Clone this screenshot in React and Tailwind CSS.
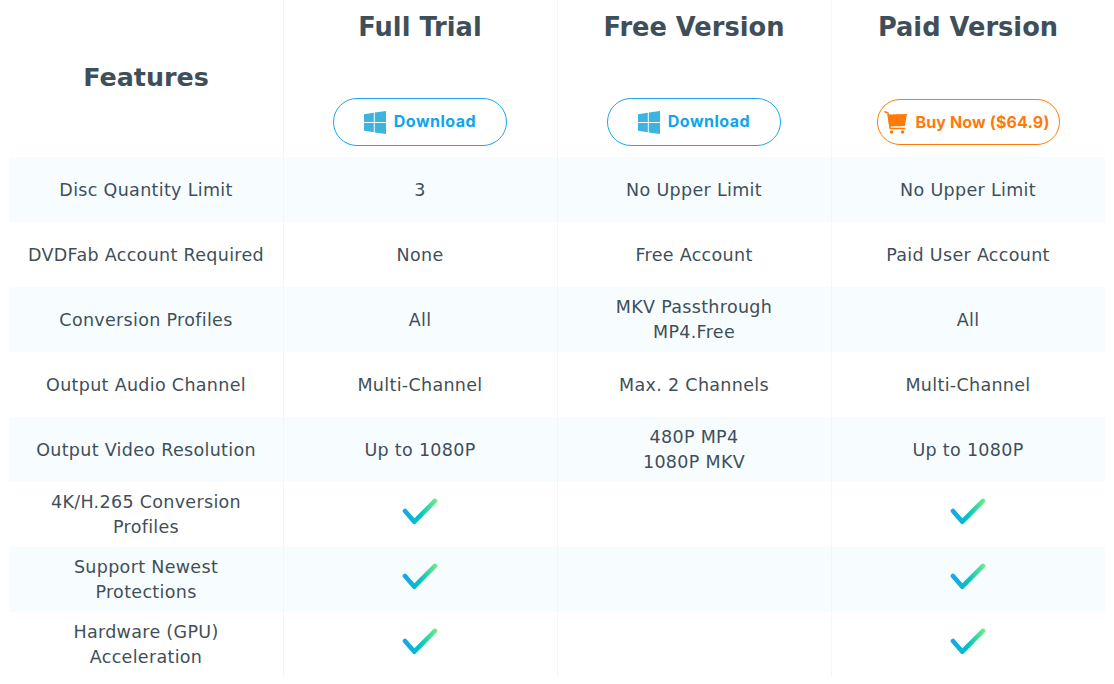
import React from "react";

const rows = [
  { name: ["Disc Quantity Limit"], cells: [["3"], ["No Upper Limit"], ["No Upper Limit"]] },
  { name: ["DVDFab Account Required"], cells: [["None"], ["Free Account"], ["Paid User Account"]] },
  { name: ["Conversion Profiles"], cells: [["All"], ["MKV Passthrough", "MP4.Free"], ["All"]] },
  { name: ["Output Audio Channel"], cells: [["Multi-Channel"], ["Max. 2 Channels"], ["Multi-Channel"]] },
  { name: ["Output Video Resolution"], cells: [["Up to 1080P"], ["480P MP4", "1080P MKV"], ["Up to 1080P"]] },
  { name: ["4K/H.265 Conversion", "Profiles"], cells: [true, false, true] },
  { name: ["Support Newest", "Protections"], cells: [true, false, true] },
  { name: ["Hardware (GPU)", "Acceleration"], cells: [true, false, true] },
];

const WindowsIcon = () => (
  <svg width="22" height="23" viewBox="0 0 22 23" className="shrink-0">
    <path d="M0 3.2 9.8 1.8V10.9H0Z" fill="#3db3e0" />
    <path d="M10.8 1.6 22 0V10.9H10.8Z" fill="#3db3e0" />
    <path d="M0 11.9H9.8V21.2L0 19.8Z" fill="#3db3e0" />
    <path d="M10.8 11.9H22V23L10.8 21.4Z" fill="#3db3e0" />
  </svg>
);

const CartIcon = () => (
  <svg width="23" height="23" viewBox="0 0 23 23" className="shrink-0">
    <path d="M0.8 0.8 4 2 6.2 17.6H20.6" fill="none" stroke="#ff7a0a" strokeWidth="1.5" strokeLinecap="round" strokeLinejoin="round" />
    <path d="M3.4 3.6 23 3 20.8 15 5.2 15.6Z" fill="#ff7a0a" />
    <circle cx="7.5" cy="21" r="1.8" fill="#ff7a0a" />
    <circle cx="18.5" cy="21" r="1.8" fill="#ff7a0a" />
  </svg>
);

const Check = ({ id }) => (
  <svg width="38" height="28" viewBox="0 0 38 28" className="mb-[5px] -ml-px">
    <defs>
      <linearGradient id={id} x1="2" y1="0" x2="36" y2="0" gradientUnits="userSpaceOnUse">
        <stop offset="0" stopColor="#1aa3f0" />
        <stop offset="0.5" stopColor="#00c4c0" />
        <stop offset="1" stopColor="#74ec86" />
      </linearGradient>
    </defs>
    <path d="M4 13 13.3 23.7 34 2.9" fill="none" stroke={`url(#${id})`} strokeWidth="4.6" strokeLinecap="round" strokeLinejoin="round" />
  </svg>
);

const PlanHead = ({ title, children }) => (
  <div className="h-[157px] border-l border-[#f3f5f6] flex flex-col items-center">
    <h2 className="mt-[9px] -ml-px text-[25.7px] leading-9 font-bold">{title}</h2>
    <div className="mt-auto mb-[11px] -ml-px flex justify-center">{children}</div>
  </div>
);

const DownloadButton = () => (
  <a className="w-[174px] h-12 rounded-full border border-[#1aa7ec] flex items-center justify-center gap-2 text-[#0ea5ec] text-base tracking-[0.5px] font-bold font-['Inter',sans-serif]">
    <WindowsIcon />
    <span className="pb-[2px]">Download</span>
  </a>
);

export default function App() {
  return (
    <div className="w-[1114px] h-[684px] bg-white overflow-hidden pl-[9px] text-[#3f4f59] font-['DejaVu_Sans',sans-serif]">
      <div className="w-[1096px] grid grid-cols-4">
        <div className="h-[157px] flex items-center justify-center">
          <h2 className="text-[25.4px] leading-9 font-bold mb-[3px]">Features</h2>
        </div>
        <PlanHead title="Full Trial">
          <DownloadButton />
        </PlanHead>
        <PlanHead title="Free Version">
          <DownloadButton />
        </PlanHead>
        <PlanHead title="Paid Version">
          <a className="w-[183px] h-[46px] mb-px rounded-full border border-[#ff7a0a] flex items-center justify-center gap-2 pr-[2px] text-[#ff7a0a] text-base tracking-[0.15px] font-bold font-['Inter',sans-serif]">
            <CartIcon />
            Buy Now ($64.9)
          </a>
        </PlanHead>

        {rows.map((row, i) => (
          <div key={i} className={`col-span-4 grid grid-cols-4 h-[65px] text-[17.5px] leading-[25px] tracking-[0.32px] text-center ${i % 2 === 0 ? "bg-[#f7fcff]" : ""}`}>
            <div className={`flex flex-col items-center justify-center ${row.name.length === 1 ? "pt-[2px]" : ""}`}>
              {row.name.map((t) => <span key={t}>{t}</span>)}
            </div>
            {row.cells.map((cell, j) => (
              <div key={j} className={`border-l border-[#f3f5f6] flex flex-col items-center justify-center ${Array.isArray(cell) && cell.length === 1 ? "pt-[2px]" : ""}`}>
                {cell === true && <Check id={`check-${i}-${j}`} />}
                {Array.isArray(cell) && cell.map((t) => <span key={t} className="-ml-px">{t}</span>)}
              </div>
            ))}
          </div>
        ))}
      </div>
    </div>
  );
}
